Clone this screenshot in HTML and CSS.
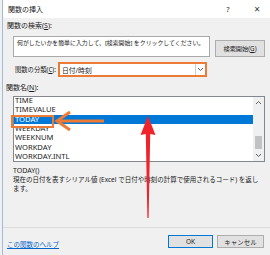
FILE: index.html
```html
<!DOCTYPE html>
<html lang="ja">
<head>
<meta charset="utf-8">
<link rel="stylesheet" href="styles.css">
</head>
<body>
<div class="win">
  <div class="titlebar">
    <span class="title">関数の挿入</span>
    <span class="help">?</span>
    <span class="close">×</span>
  </div>
  <div class="content">
    <div class="lbl lbl-search">関数の検索(<u>S</u>):</div>
    <div class="search-row">
      <div class="searchbox">何がしたいかを簡単に入力して、[検索開始] をクリックしてください。</div>
      <div class="btn btn-search">検索開始(<u>G</u>)</div>
    </div>
    <div class="cat-row">
      <span class="lbl lbl-cat">関数の分類(<u>C</u>):</span>
      <div class="select-wrap">
        <div class="select">
          <span class="select-text">日付/時刻</span>
          <span class="dd"><svg width="7" height="5" viewBox="0 0 7 5"><path d="M1 1 L3.5 3.5 L6 1" fill="none" stroke="#606060" stroke-width="1"/></svg></span>
        </div>
      </div>
    </div>
    <div class="lbl lbl-name">関数名(<u>N</u>):</div>
    <div class="listbox">
      <ul class="items">
        <li>TIME</li>
        <li>TIMEVALUE</li>
        <li class="sel">TODAY</li>
        <li>WEEKDAY</li>
        <li>WEEKNUM</li>
        <li>WORKDAY</li>
        <li>WORKDAY.INTL</li>
      </ul>
      <div class="scrollbar">
        <span class="sb-arrow"><svg width="7" height="5" viewBox="0 0 7 5"><path d="M1 4 L3.5 1.5 L6 4" fill="none" stroke="#606060" stroke-width="1"/></svg></span>
        <span class="sb-track"><span class="sb-thumb"></span></span>
        <span class="sb-arrow"><svg width="7" height="5" viewBox="0 0 7 5"><path d="M1 1 L3.5 3.5 L6 1" fill="none" stroke="#606060" stroke-width="1"/></svg></span>
      </div>
    </div>
    <div class="syntax">TODAY()</div>
    <div class="desc">現在の日付を表すシリアル値 (Excel で日付や時刻の計算で使用されるコード) を返し<br>ます。</div>
  </div>
  <div class="footer">
    <span class="link">この関数のヘルプ</span>
    <div class="btns">
      <div class="btn btn-ok">OK</div>
      <div class="btn btn-cancel">キャンセル</div>
    </div>
  </div>
</div>
<svg class="overlay" width="270" height="255" viewBox="0 0 270 255">
  <rect x="12" y="116" width="41" height="11" fill="none" stroke="#ee7b35" stroke-width="2"/>
  <path d="M70 112 L57 121 L70 130" fill="none" stroke="#ee7b35" stroke-width="3" stroke-linejoin="miter"/>
  <path d="M58 121 L104 121" fill="none" stroke="#ee7b35" stroke-width="3"/>
  <path d="M148 116 L155.5 135 L150.2 134 L148.6 218 L147.4 218 L145.8 134 L140.5 135 Z" fill="#f0222a"/>
</svg>
</body>
</html>
```
FILE: styles.css
```css
* { box-sizing: border-box; }
html, body { margin: 0; padding: 0; }
body {
  width: 270px;
  height: 255px;
  overflow: hidden;
  background: #f0f0f0;
  font-family: "Noto Sans", "Noto Sans CJK JP", sans-serif;
  font-size: 7px;
  color: #1a1a1a;
  position: relative;
}
u { text-decoration: underline; text-underline-offset: 1px; }
.win {
  margin-left: 2px;
  width: 268px;
  height: 255px;
  border-left: 1px solid #9dbde0;
  display: flex;
  flex-direction: column;
}
.titlebar {
  height: 18px;
  background: #fff;
  display: flex;
  align-items: center;
  padding-left: 5px;
  font-size: 7px;
}
.title { flex: 1; }
.help { width: 8px; text-align: center; margin-right: 20px; font-size: 7.5px; }
.close { width: 10px; text-align: center; margin-right: 8px; font-size: 10px; color: #333; }
.content {
  height: 209px;
  display: flex;
  flex-direction: column;
}
.lbl { line-height: 9px; white-space: nowrap; }
.lbl-search { margin: 3px 0 0 4px; }
.search-row {
  display: flex;
  align-items: flex-end;
  gap: 5px;
  margin-top: 6px;
  padding-left: 10px;
}
.searchbox {
  width: 197px;
  height: 21px;
  background: #fff;
  border: 1px solid #a9a9a9;
  padding: 2px 0 0 3px;
  font-size: 5.9px;
  line-height: 9px;
  white-space: nowrap;
  overflow: hidden;
}
.btn {
  display: flex;
  align-items: center;
  justify-content: center;
  background: #e1e1e1;
  border: 1px solid #adadad;
  font-size: 6.5px;
  white-space: nowrap;
}
.btn-search { width: 50px; height: 17px; font-size: 6.2px; }
.cat-row {
  display: flex;
  align-items: center;
  margin-top: 5px;
  padding-left: 12px;
}
.lbl-cat { width: 43px; font-size: 6.3px; }
.select-wrap {
  width: 149px;
  height: 15px;
  border: 2px solid #ee7b35;
}
.select {
  height: 100%;
  background: #fff;
  display: flex;
  align-items: center;
  padding-left: 2px;
  font-size: 6.8px;
}
.select-text { flex: 1; }
.dd {
  width: 10px;
  height: 100%;
  border-left: 1px solid #d0d0d0;
  display: flex;
  align-items: center;
  justify-content: center;
}
.lbl-name { margin: 6px 0 0 3px; }
.listbox {
  margin: 4px 0 0 10px;
  width: 252px;
  height: 66px;
  border: 1px solid #828790;
  background: #fff;
  display: flex;
  overflow: hidden;
}
.items {
  list-style: none;
  margin: -1px 0 0 0;
  padding: 0;
  flex: 1;
  font-size: 7.6px;
}
.items li {
  height: 9.33px;
  line-height: 9px;
  padding-left: 1px;
}
.items li.sel { background: #0078d7; color: #fff; }
.scrollbar {
  width: 11px;
  background: #f0f0f0;
  display: flex;
  flex-direction: column;
  align-items: center;
}
.sb-arrow { height: 11px; display: flex; align-items: center; justify-content: center; }
.sb-track { flex: 1; width: 100%; display: flex; flex-direction: column; justify-content: flex-end; align-items: center; }
.sb-thumb { width: 7px; height: 13px; background: #c2c2c2; margin-bottom: 1px; }
.syntax { margin: 4px 0 0 10px; line-height: 9px; }
.desc { margin: 1px 0 0 10px; line-height: 8.5px; font-size: 6.5px; }
.footer {
  flex: 1;
  border-top: 1px solid #dcdcdc;
  display: flex;
  align-items: flex-start;
  padding: 7px 6px 0 4px;
}
.link {
  flex: 1;
  color: #0066cc;
  text-decoration: underline;
  margin-top: 4px;
  font-size: 6.5px;
}
.btns { display: flex; gap: 4px; }
.btn-ok { width: 45px; height: 13px; border-color: #0078d7; }
.btn-cancel { width: 47px; height: 13px; }
.overlay { position: absolute; left: 0; top: 0; pointer-events: none; }
```
